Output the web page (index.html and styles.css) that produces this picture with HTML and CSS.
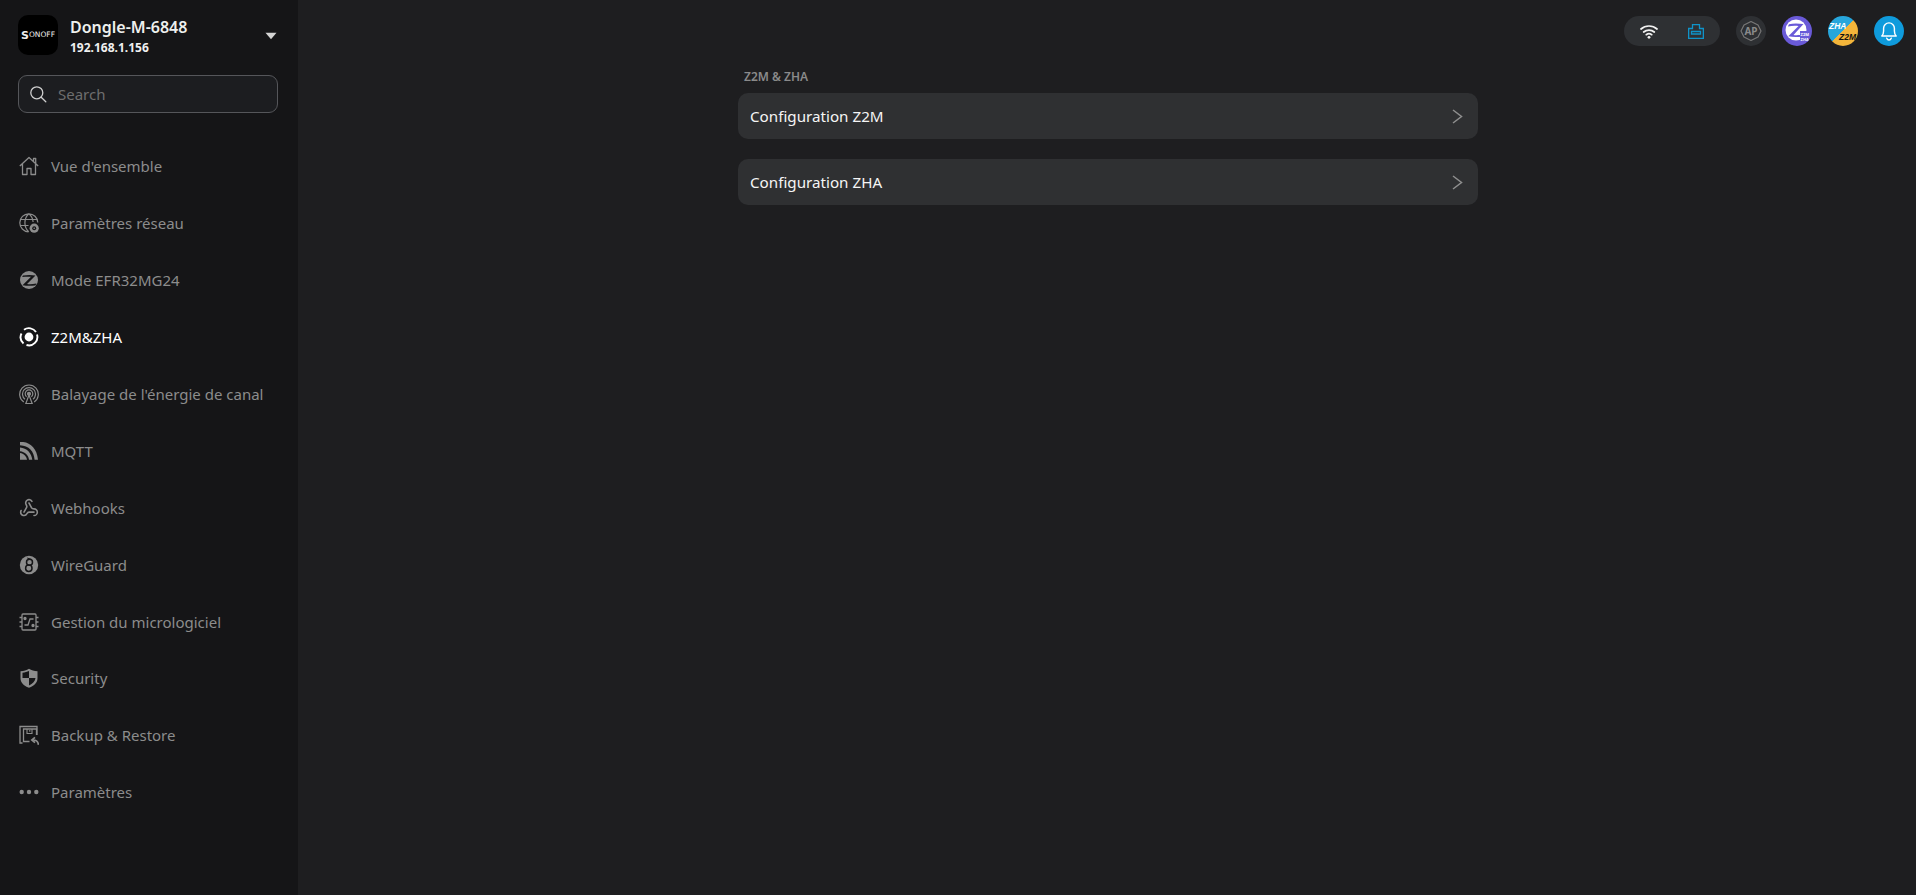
FILE: index.html
```html
<!DOCTYPE html>
<html lang="fr">
<head>
<meta charset="utf-8">
<title>Z2M&amp;ZHA</title>
<link rel="stylesheet" href="styles.css">
</head>
<body>
<div class="app">
  <aside class="sidebar">
    <div class="device">
      <div class="logo"><span class="logo-s">S</span><span class="logo-rest">ONOFF</span></div>
      <div class="device-info">
        <div class="device-name">Dongle-M-6848</div>
        <div class="device-ip">192.168.1.156</div>
      </div>
      <svg class="caret" width="12" height="8" viewBox="0 0 12 8"><path d="M0.5 0.8h11L6 7.2z" fill="#d4d4d4"/></svg>
    </div>
    <div class="search">
      <svg width="18" height="18" viewBox="0 0 18 18" fill="none" stroke="#cfcfcf" stroke-width="1.3" stroke-linecap="round"><circle cx="7.8" cy="7.8" r="6"/><path d="M12.2 12.2l4.6 4.6"/></svg>
      <span>Search</span>
    </div>
    <nav class="nav">
      <a class="item"><svg class="ico" viewBox="0 0 20 20" fill="none" stroke="currentColor" stroke-width="1.3" stroke-linejoin="round"><path d="M.8 10 10 1.500 19.200 10M3.500 8v10.500h4.500v-6h4v6h4.500V8M14.500 5.500V2.500h2.200v5"/></svg><span>Vue d'ensemble</span></a>
      <a class="item"><svg class="ico" viewBox="0 0 20 20" fill="none" stroke="currentColor" stroke-width="1.200"><path d="M9.500 18.800A9 9 0 1 1 18.800 9.500M1.200 6.500h17M1 12.500h8.500M9.800 .8c-5.200 4.500-5.200 13.500 0 18M10 .8c2.500 2.300 3.900 5 4.100 8.200"/><circle cx="15.200" cy="15.200" r="4.600" fill="currentColor" stroke="none"/><circle cx="15.200" cy="15.200" r="2" fill="#151517" stroke="none"/><circle cx="15.200" cy="15.200" r=".8" fill="currentColor" stroke="none"/></svg><span>Paramètres réseau</span></a>
      <a class="item"><svg class="ico" viewBox="0 0 20 20"><circle cx="10" cy="10" r="9" fill="currentColor"/><path d="M4 5.600c4-.8 8.500-.8 12.500-.1L8 14c2.800.4 5.800.2 9.400-.6-.3.800-.7 1.500-1.300 2.100-4.200.5-8.400.5-12.600-.3L12 6.800c-3-.3-5.700-.2-8.800.3.200-.5.500-1 .8-1.500z" fill="#151517"/></svg><span>Mode EFR32MG24</span></a>
      <a class="item active"><svg class="ico" viewBox="0 0 20 20" fill="none" stroke="currentColor"><path d="M5 2.800A8.400 8.400 0 0 1 17 5M18 7.500A8.400 8.400 0 0 1 7.500 18M4.500 16.500A8.400 8.400 0 0 1 2.500 6.500" stroke-width="1.900"/><circle cx="10" cy="10" r="4.400" fill="currentColor" stroke="none"/></svg><span>Z2M&amp;ZHA</span></a>
      <a class="item"><svg class="ico" viewBox="0 0 20 20" fill="none" stroke="currentColor" stroke-width="1.200"><path d="M4.800 18A9.300 9.300 0 1 1 15.200 18M6 15.200a6.500 6.500 0 1 1 8 0M7.600 12.700a3.800 3.800 0 1 1 4.800 0"/><circle cx="10" cy="9.800" r="1.500" fill="currentColor"/><path d="M10 11 6.800 19.500h6.400z"/></svg><span>Balayage de l'énergie de canal</span></a>
      <a class="item"><svg class="ico" viewBox="0 0 20 20" fill="currentColor"><path d="M1 1h3.200C12 2 18 8 19 18.800h-3.400C15 10 10 4.800 1 4.200z"/><path d="M1 6.500c6.800.4 11.700 5.800 12.300 12.300H10C9.500 14 6 10.700 1 10.200z"/><path d="M1 12c3.800.4 6.400 3.300 7 6.800H1z"/></svg><span>MQTT</span></a>
      <a class="item"><svg class="ico" viewBox="0 0 24 24" fill="none" stroke="currentColor" stroke-width="1.900" stroke-linecap="round" stroke-linejoin="round"><path d="M18 16.980h-5.990c-1.100 0-1.950.94-2.480 1.900A4 4 0 0 1 2 17c.01-.7.200-1.400.570-2"/><path d="m6 17 3.130-5.780c.53-.97.100-2.180-.5-3.100a4 4 0 1 1 6.890-4.060"/><path d="m12 6 3.130 5.730C15.660 12.700 16.900 13 18 13a4 4 0 0 1 0 8"/></svg><span>Webhooks</span></a>
      <a class="item"><svg class="ico" viewBox="0 0 20 20"><circle cx="10" cy="10" r="9.200" fill="currentColor"/><circle cx="10.500" cy="7.300" r="3" fill="none" stroke="#151517" stroke-width="1.500"/><circle cx="9.800" cy="13.300" r="3.200" fill="none" stroke="#151517" stroke-width="1.500"/><path d="M8 2.500l4.500 1.500-3 1.300z" fill="#151517"/></svg><span>WireGuard</span></a>
      <a class="item"><svg class="ico" viewBox="0 0 20 20" fill="none" stroke="currentColor" stroke-width="1.300"><rect x="3" y="2" width="14" height="16" rx="1"/><path d="M.5 5.500H3M.5 10H3M.5 14.500H3M17 5.500h2.500M17 10h2.500M17 14.500h2.500M5.500 13h3.500l2-6h3.500"/><circle cx="6" cy="6.500" r="1" fill="currentColor"/><circle cx="14" cy="13.500" r="1" fill="currentColor"/></svg><span>Gestion du micrologiciel</span></a>
      <a class="item"><svg class="ico" viewBox="0 0 20 20"><path d="M10 .8c2.500 1.500 5 2.300 8.500 2.500v6.700c0 4.500-3 7.800-8.500 9.800-5.500-2-8.500-5.300-8.500-9.800V3.300C5 3.100 7.500 2.300 10 .8z" fill="currentColor"/><path d="M10 3v7H3.500V4.800c2.600-.3 4.600-1 6.500-1.800zM10 10h6.500c-.3 3.400-2.800 5.800-6.500 7.400z" fill="#151517"/></svg><span>Security</span></a>
      <a class="item"><svg class="ico" viewBox="0 0 20 20" fill="none" stroke="currentColor" stroke-width="1.300"><path d="M3.500 18H1V1.500h17V10"/><path d="M10.500 16.500H4.500V4h13v6"/><path d="M8 4v4.500h5V4M10.800 5v1.800" stroke-width="1.100"/><path d="M19.500 19.800c-.5-3-2.500-4.800-5-4.800M16 12.300 12.800 15l3.200 2.700" stroke-width="1.700"/></svg><span>Backup &amp; Restore</span></a>
      <a class="item"><svg class="ico" viewBox="0 0 20 20" fill="currentColor"><circle cx="2.700" cy="10" r="2.200"/><circle cx="10" cy="10" r="2.200"/><circle cx="17.300" cy="10" r="2.200"/></svg><span>Paramètres</span></a>
    </nav>
  </aside>
  <main class="main">
    <header class="topbar">
      <div class="pill">
        <svg width="18" height="15" viewBox="0 0 18 15" fill="none" stroke="#f2f2f2" stroke-width="1.700" stroke-linecap="round"><path d="M1 5C5.500 1 12.500 1 17 5M3.700 8c3-2.600 7.600-2.600 10.600 0M6.300 10.700c1.600-1.200 3.800-1.200 5.400 0"/><circle cx="9" cy="13.300" r="1.400" fill="#f2f2f2" stroke="none"/></svg>
        <svg width="16" height="15" viewBox="0 0 16 15" fill="none" stroke="#0f93c9" stroke-width="1.300"><path d="M.65 4.500H4.500V.65h7V4.500h3.850v9.850H.65z"/><path d="M3.500 7.500h9v2.500h-9z"/></svg>
      </div>
      <div class="round ap"><svg width="26" height="26" viewBox="0 0 26 26" fill="none" stroke="#777" stroke-width="1.200" stroke-linejoin="round"><path d="M13 3.500 20 7 23 13 20 19 13 22.500 6 19 3 13 6 7z"/></svg><span>AP</span></div>
      <div class="round zb"><svg width="30" height="30" viewBox="0 0 30 30"><circle cx="14" cy="14" r="10.500" fill="#fff"/><path d="M7 8.200c4-.8 9-.8 14.500-.1L11.500 19c3 .4 6 .2 10-.7-.4.900-1 1.700-1.700 2.400-4.800.5-9.300.5-13.500-.4L16.500 10c-3.500-.3-6.500-.2-10.500.4.200-.8.600-1.500 1-2.200z" fill="#6a5ad8"/></svg><span class="zb-tag">Z2M<br>ZHA</span></div>
      <div class="round zz"><span class="zz-a">ZHA</span><span class="zz-b">Z2M</span></div>
      <div class="round bell"><svg width="18" height="20" viewBox="0 0 20 22" fill="none" stroke="#fff" stroke-width="1.600" stroke-linejoin="round"><path d="M2 16.500c1.500-1.500 2-3 2-5.500V8a6 6 0 0 1 12 0v3c0 2.500.5 4 2 5.500z"/><path d="M7.500 19c.5 1.300 1.400 2 2.500 2s2-.7 2.500-2" stroke-linecap="round"/></svg></div>
    </header>
    <section class="content">
      <h2 class="label">Z2M &amp; ZHA</h2>
      <div class="card"><span>Configuration Z2M</span><svg width="11" height="15" viewBox="0 0 11 15" fill="none" stroke="#8f8f8f" stroke-width="1.500"><path d="M1 1l8.500 6.500L1 14"/></svg></div>
      <div class="card"><span>Configuration ZHA</span><svg width="11" height="15" viewBox="0 0 11 15" fill="none" stroke="#8f8f8f" stroke-width="1.500"><path d="M1 1l8.500 6.500L1 14"/></svg></div>
    </section>
  </main>
</div>
</body>
</html>
```

FILE: styles.css
```css
* { box-sizing: border-box; }
html, body { height: 100%; margin: 0; }
body {
  background: #1e1e20;
  color: #fff;
  font-family: "Noto Sans", "Open Sans", "Liberation Sans", sans-serif;
  overflow: hidden;
}
.app { display: flex; height: 895px; }
.sidebar {
  width: 298px;
  flex: none;
  background: #151517;
  padding: 15px 19px 0 18px;
}
.device { display: flex; align-items: center; height: 40px; }
.logo {
  width: 40px;
  height: 40px;
  flex: none;
  border-radius: 10px;
  background: #000;
  display: flex;
  align-items: center;
  justify-content: center;
  font-family: "DejaVu Sans", sans-serif;
  color: #eee;
  line-height: 1;
}
.logo-s { font-size: 11px; font-weight: 700; }
.logo-rest { font-size: 7.500px; font-weight: 400; }
.device-info { margin-left: 12px; flex: 1; padding-top: 3px; }
.device-name { font-size: 16px; font-weight: 600; line-height: 20px; color: #eef0ee; }
.device-ip { font-size: 12px; font-weight: 700; line-height: 18px; margin-top: 2px; color: #f0f0f0; }
.caret { margin-right: 2px; margin-top: 1px; }
.search {
  margin-top: 20px;
  width: 260px;
  height: 38px;
  border: 1px solid #55565a;
  border-radius: 9px;
  background: #1c1d20;
  display: flex;
  align-items: center;
  padding-left: 10px;
  gap: 11px;
  font-size: 15px;
  color: #6e6e6e;
}
.nav { margin-top: 25px; display: flex; flex-direction: column; }
.item {
  display: flex;
  align-items: center;
  height: 56.900px;
  gap: 12px;
  font-size: 15px;
  color: #8c8c8c;
}
.item.active { color: #fff; }
.ico { width: 20px; height: 20px; flex: none; margin-left: 1px; color: #8c8c8c; }
.item.active .ico { color: #fff; }
.main { flex: 1; min-width: 0; display: flex; flex-direction: column; padding-left: 2px; }
.topbar {
  display: flex;
  justify-content: flex-end;
  align-items: center;
  gap: 16px;
  height: 30px;
  margin-top: 16px;
  padding-right: 12px;
}
.pill {
  width: 96px;
  height: 30px;
  border-radius: 15px;
  background: #2e3033;
  display: flex;
  align-items: center;
  justify-content: space-between;
  padding: 0 16px;
}
.round {
  position: relative;
  width: 30px;
  height: 30px;
  border-radius: 50%;
  display: flex;
  align-items: center;
  justify-content: center;
  overflow: hidden;
}
.ap { background: #2e3033; }
.ap span {
  position: absolute;
  font-size: 10px;
  font-weight: 700;
  color: #8a8a8a;
}
.ap svg { position: absolute; }
.zb { background: #6a5ad8; }
.zb-tag {
  position: absolute;
  right: 3px;
  bottom: 4px;
  padding: 1px 0 0 1px;
  background: #6a5ad8;
  font-size: 4px;
  line-height: 5px;
  font-weight: 700;
  color: #fff;
}
.zz {
  background: linear-gradient(135deg, #27a6dc 49%, #f3b53a 50%);
  display: block;
  font-family: "Liberation Sans", sans-serif;
  font-style: italic;
  font-weight: 700;
}
.zz-a {
  position: absolute;
  left: 1px;
  top: 5px;
  font-size: 8.500px;
  color: #fff;
}
.zz-b {
  position: absolute;
  right: 2px;
  bottom: 4px;
  font-size: 8.500px;
  color: #111;
}
.bell { background: #0f9bdc; }
.content {
  width: 740px;
  margin: 22px auto 0 auto;
}
.label {
  margin: 0 0 0 6px;
  font-size: 12px;
  font-weight: 600;
  line-height: 17px;
  height: 17px;
  color: #8a8a8a;
}
.card {
  height: 46px;
  margin-top: 20px;
  border-radius: 10px;
  background: #2f3032;
  display: flex;
  align-items: center;
  justify-content: space-between;
  padding: 0 15px 0 12px;
  font-size: 15.200px;
  color: #f5f5f5;
}
.label + .card { margin-top: 8px; }
```
